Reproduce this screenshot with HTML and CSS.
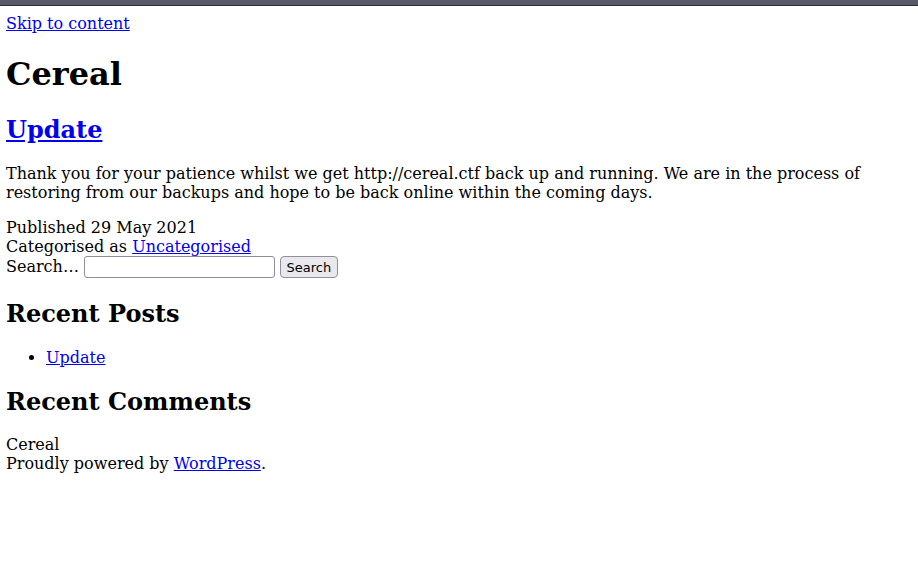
FILE: index.html
```html
<!DOCTYPE html>
<html lang="en-GB">
<head>
<meta charset="utf-8">
<title>Cereal</title>
<link rel="stylesheet" href="styles.css">
</head>
<body>
<div class="topbar"></div>
<div class="page">
<a class="skip" href="#content">Skip to content</a>
<header>
<h1 class="site-title">Cereal</h1>
</header>
<main id="content">
<article>
<h2 class="entry-title"><a href="#">Update</a></h2>
<p>Thank you for your patience whilst we get http://cereal.ctf back up and running. We are in the process of restoring from our backups and hope to be back online within the coming days.</p>
<div class="meta">
<div>Published 29 May 2021</div>
<div>Categorised as <a href="#">Uncategorised</a></div>
</div>
</article>
</main>
<aside>
<form class="search">
<label for="s">Search…</label>
<input id="s" type="search">
<button type="button">Search</button>
</form>
<h2 class="widget-title first">Recent Posts</h2>
<ul>
<li><a href="#">Update</a></li>
</ul>
<h2 class="widget-title last">Recent Comments</h2>
</aside>
<footer>
<div>Cereal</div>
<div>Proudly powered by <a href="#">WordPress</a>.</div>
</footer>
</div>
</body>
</html>
```

FILE: styles.css
```css
html, body {
  margin: 0;
  padding: 0;
  background: #fff;
}
body {
  font-family: "DejaVu Serif", serif;
  font-size: 16px;
  color: #000;
}
a { color: #0000ee; }
.topbar {
  height: 5px;
  background: #585a68;
  border-bottom: 1px solid #2e2e36;
}
.page {
  padding: 8px 6px;
}
.site-title {
  font-size: 32px;
  margin: 22px 0 21px;
}
h2 {
  font-size: 24px;
  margin: 20px 0;
}
.entry-title { margin-top: 22px; }
.widget-title.first { margin-top: 21px; }
.widget-title.last { margin-bottom: 19px; }
p { margin: 16px 0; }
.search input {
  box-sizing: border-box;
  width: 191px;
  height: 22px;
  border: 1px solid #8f8f9d;
  border-radius: 3px;
  vertical-align: middle;
  margin: 0;
}
.search button {
  box-sizing: border-box;
  height: 22px;
  padding: 0 5.5px;
  margin: 0;
  background: #e9e9ed;
  border: 1px solid #8f8f9d;
  border-radius: 4px;
  color: #000;
  font-family: "DejaVu Sans", sans-serif;
  font-size: 13px;
  vertical-align: middle;
}
ul { margin: 16px 0; padding-left: 40px; }
footer { margin-top: 0; }
```
